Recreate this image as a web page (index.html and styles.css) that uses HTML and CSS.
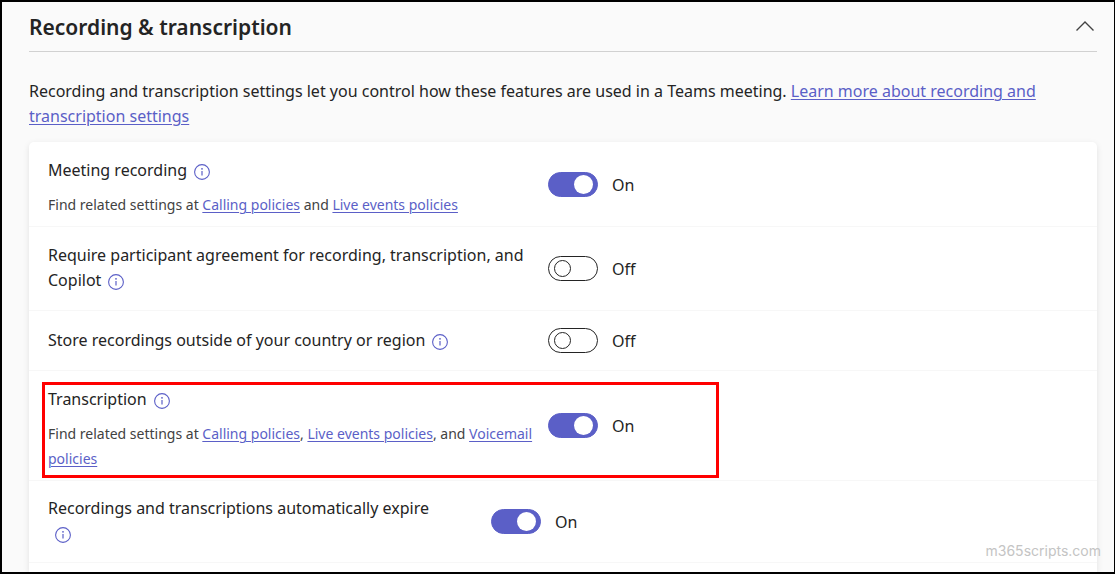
FILE: index.html
```html
<!DOCTYPE html>
<html lang="en">
<head>
<meta charset="utf-8">
<meta name="viewport" content="width=device-width, initial-scale=1">
<title>Recording &amp; transcription</title>
<link rel="stylesheet" href="styles.css">
</head>
<body>
<svg class="sprite" aria-hidden="true">
  <symbol id="info" viewBox="0 0 16 16">
    <circle cx="8" cy="8" r="7.4" fill="none" stroke="currentColor" stroke-width="1.1"/>
    <circle cx="8" cy="4.8" r="0.9" fill="currentColor"/>
    <path d="M8 7v4.6" stroke="currentColor" stroke-width="1.2"/>
  </symbol>
</svg>
<main class="page">
  <header class="header">
    <h1 class="title">Recording &amp; transcription</h1>
    <button class="collapse" type="button" aria-label="Collapse section" aria-expanded="true">
      <svg class="chevron" viewBox="0 0 18 10" aria-hidden="true"><path d="M0.5 9.5 9 1l8.500 8.500" fill="none" stroke="currentColor" stroke-width="1.4"/></svg>
    </button>
  </header>
  <p class="intro">Recording and transcription settings let you control how these features are used in a Teams meeting. <a href="#">Learn more about recording and transcription settings</a></p>

  <section class="card">
    <div class="row">
      <div class="text">
        <label class="name" for="recording">Meeting recording</label><button class="info" type="button" aria-label="About meeting recording"><svg><use href="#info"/></svg></button>
        <p class="related">Find related settings at <a href="#">Calling policies</a> and <a href="#">Live events policies</a></p>
      </div>
      <div class="control"><input class="switch" type="checkbox" role="switch" id="recording" checked><span class="state">On</span></div>
    </div>
    <div class="row">
      <div class="text">
        <label class="name" for="agreement">Require participant agreement for recording, transcription, and Copilot</label><button class="info" type="button" aria-label="About participant agreement"><svg><use href="#info"/></svg></button>
      </div>
      <div class="control"><input class="switch" type="checkbox" role="switch" id="agreement"><span class="state">Off</span></div>
    </div>
    <div class="row">
      <div class="text">
        <label class="name" for="region">Store recordings outside of your country or region</label><button class="info" type="button" aria-label="About recording storage"><svg><use href="#info"/></svg></button>
      </div>
      <div class="control"><input class="switch" type="checkbox" role="switch" id="region"><span class="state">Off</span></div>
    </div>
    <div class="row row-marked">
      <div class="text">
        <label class="name" for="transcription">Transcription</label><button class="info" type="button" aria-label="About transcription"><svg><use href="#info"/></svg></button>
        <p class="related">Find related settings at <a href="#">Calling policies</a>, <a href="#">Live events policies</a>, and <a href="#">Voicemail policies</a></p>
      </div>
      <div class="control"><input class="switch" type="checkbox" role="switch" id="transcription" checked><span class="state">On</span></div>
    </div>
    <div class="row row-narrow">
      <div class="text">
        <label class="name" for="expire">Recordings and transcriptions automatically expire</label><button class="info" type="button" aria-label="About automatic expiry"><svg><use href="#info"/></svg></button>
      </div>
      <div class="control"><input class="switch" type="checkbox" role="switch" id="expire" checked><span class="state">On</span></div>
    </div>
  </section>
  <div class="watermark">m365scripts.com</div>
</main>
</body>
</html>
```
FILE: styles.css
```css
*,
*::before,
*::after {
  box-sizing: border-box;
}

body {
  margin: 0;
  background: #fafafa;
  color: #242424;
  font-family: "Noto Sans", sans-serif;
  font-size: 16px;
  line-height: 25px;
}

a {
  color: #5b5fc7;
  text-decoration: underline;
  text-underline-offset: 2px;
  text-decoration-thickness: 1px;
}

button {
  padding: 0;
  border: 0;
  background: none;
  font: inherit;
  cursor: pointer;
}

.sprite {
  display: none;
}

.page {
  position: relative;
  display: flex;
  flex-direction: column;
  min-height: 100vh;
  padding: 0 17px 0 27px;
  border: solid #000;
  border-width: 2px 1px 2px 2px;
  overflow: hidden;
}

.header {
  display: flex;
  align-items: center;
  justify-content: space-between;
  height: 50px;
  border-bottom: 1px solid #d1d1d1;
}

.title {
  margin: 0;
  font-size: 21px;
  font-weight: 600;
  line-height: 28px;
}

.collapse {
  display: flex;
  padding: 0 3px 2px;
  color: #424242;
}

.chevron {
  width: 18px;
  height: 10px;
}

.intro {
  margin: 27px 0 13px;
}

.card {
  flex: 1;
  background: #fff;
  border-radius: 5px 5px 0 0;
  box-shadow: 0 2px 6px rgba(0, 0, 0, 0.1);
}

.row {
  position: relative;
  display: flex;
  align-items: center;
  min-height: 60px;
  padding: 0 19px;
  border-bottom: 1px solid #f7f7f7;
}

.text {
  flex: 0 0 500px;
  padding: 16px 8px 17px 0;
}

.row-narrow .text {
  flex-basis: 443px;
  padding: 15px 40px 16px 0;
}

.info {
  width: 16px;
  height: 16px;
  margin-left: 7px;
  color: #5b5fc7;
  vertical-align: -4px;
  line-height: 0;
}

.info svg {
  width: 16px;
  height: 16px;
}

.related {
  margin: 9px 0 -8px;
  color: #424242;
  font-size: 14px;
}

.control {
  display: flex;
  align-items: center;
  gap: 14px;
}

.switch {
  appearance: none;
  display: flex;
  align-items: center;
  width: 50px;
  height: 25px;
  margin: 0;
  padding: 0 5px;
  border: 1px solid #242424;
  border-radius: 13px;
  background: #fff;
  cursor: pointer;
}

.switch::before {
  content: "";
  width: 17px;
  height: 17px;
  border: 1px solid #242424;
  border-radius: 50%;
}

.switch:checked {
  justify-content: flex-end;
  padding: 0 4px;
  border-color: #5b5fc7;
  background: #5b5fc7;
}

.switch:checked::before {
  width: 19px;
  height: 19px;
  border: 0;
  background: #fff;
}

.state {
  padding-top: 2px;
}

.row-marked::after {
  content: "";
  position: absolute;
  top: 11px;
  bottom: 2px;
  left: 13px;
  width: 677px;
  border: 3px solid #f00;
  pointer-events: none;
}

.watermark {
  position: absolute;
  right: 13px;
  bottom: 9px;
  color: #c4c4c4;
  font-family: Inter, sans-serif;
  font-size: 14px;
}
```
